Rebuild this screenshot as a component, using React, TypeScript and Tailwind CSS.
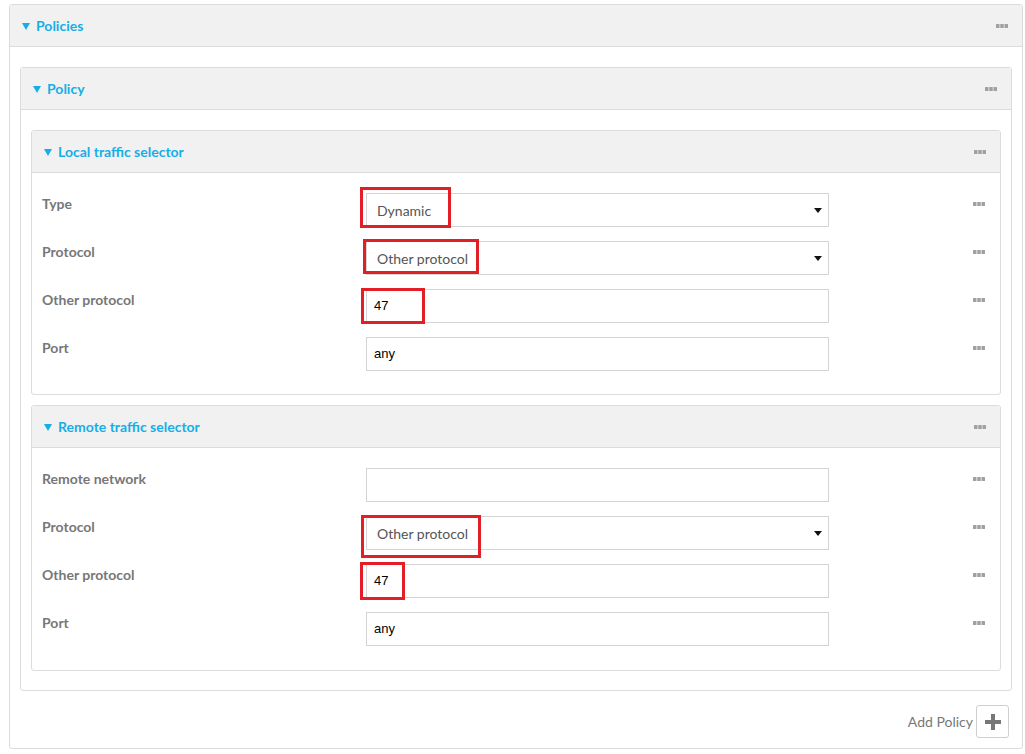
import type { ReactNode } from "react"

const font = { fontFamily: "Lato, 'Open Sans', sans-serif" }

function Dots() {
  return (
    <svg width="12" height="4" viewBox="0 0 12 4" className="shrink-0">
      <rect x="0" y="0" width="3.5" height="4" rx="0.6" fill="#a0a0a0" />
      <rect x="4.25" y="0" width="3.5" height="4" rx="0.6" fill="#a0a0a0" />
      <rect x="8.5" y="0" width="3.5" height="4" rx="0.6" fill="#a0a0a0" />
    </svg>
  )
}

function Panel({ title, children, bodyClass }: { title: string; children: ReactNode; bodyClass: string }) {
  return (
    <div className="border border-[#dcdcdc] rounded-[3px] bg-white">
      <div className="h-[42px] bg-[#f1f1f1] border-b border-[#dcdcdc] flex items-center pl-[12px] pr-[14px] rounded-t-[3px]">
        <svg width="8" height="7" viewBox="0 0 8 7" className="mr-[6px] mt-[1px]">
          <path d="M0 0h8L4 7z" fill="#16aee8" />
        </svg>
        <span className="text-[#16aee8] text-[14px] font-bold flex-1">{title}</span>
        <Dots />
      </div>
      <div className={bodyClass}>{children}</div>
    </div>
  )
}

interface Mark {
  left: number
  top: number
  width: number
  height: number
}

function Row({ label, value, select, mark }: { label: string; value: string; select?: boolean; mark?: Mark }) {
  return (
    <div className="flex items-start h-[48px]">
      <div className="w-[334px] pl-[10px] pt-[1px] text-[14px] font-bold text-[#777] leading-[20px]">{label}</div>
      <div className="relative w-[463px] h-[34px]">
        <div className="w-full h-full border border-[#d4d4d4] bg-white flex items-center">
          {select ? (
            <>
              <span className="flex-1 pl-[10px] text-[14px] text-[#555]">{value}</span>
              <svg width="8" height="5" viewBox="0 0 8 5" className="mr-[6px]">
                <path d="M0 0h8L4 5z" fill="#111" />
              </svg>
            </>
          ) : (
            <span className="pl-[7px] text-[13px] text-black" style={{ fontFamily: "'Liberation Sans', Arial, sans-serif" }}>
              {value}
            </span>
          )}
        </div>
        {mark && (
          <div
            className="absolute border-[3px] border-[#e21f26] pointer-events-none"
            style={{ left: mark.left, top: mark.top, width: mark.width, height: mark.height }}
          />
        )}
      </div>
      <div className="flex-1 flex justify-end pr-[15px] pt-[9px]">
        <Dots />
      </div>
    </div>
  )
}

export default function App() {
  return (
    <div className="w-[1025px] h-[754px] bg-white pt-[4px] pl-[9px] pr-[2px]" style={font}>
      <Panel title="Policies" bodyClass="px-[10px] pt-[20px] pb-[10px]">
        <Panel title="Policy" bodyClass="px-[10px] pt-[20px] pb-[19px]">
          <Panel title="Local traffic selector" bodyClass="pt-[20px] pb-[9px]">
            <Row label="Type" value="Dynamic" select mark={{ left: -6, top: -6, width: 91, height: 41 }} />
            <Row label="Protocol" value="Other protocol" select mark={{ left: -3, top: -2, width: 116, height: 35 }} />
            <Row label="Other protocol" value="47" mark={{ left: -5, top: -1, width: 64, height: 36 }} />
            <Row label="Port" value="any" />
          </Panel>
          <div className="h-[10px]" />
          <Panel title="Remote traffic selector" bodyClass="pt-[20px] pb-[10px]">
            <Row label="Remote network" value="" />
            <Row label="Protocol" value="Other protocol" select mark={{ left: -5, top: -1, width: 120, height: 43 }} />
            <Row label="Other protocol" value="47" mark={{ left: -6, top: -2, width: 45, height: 38 }} />
            <Row label="Port" value="any" />
          </Panel>
        </Panel>
        <div className="flex items-center justify-end pt-[14px] pr-[3px]">
          <span className="text-[14px] text-[#777] mr-[3px]">Add Policy</span>
          <button className="w-[33px] h-[33px] border border-[#cfcfcf] rounded-[3px] bg-white flex items-center justify-center">
            <svg width="16" height="16" viewBox="0 0 16 16">
              <path d="M6 0h4v6h6v4h-6v6H6v-6H0V6h6z" fill="#777" />
            </svg>
          </button>
        </div>
      </Panel>
    </div>
  )
}
